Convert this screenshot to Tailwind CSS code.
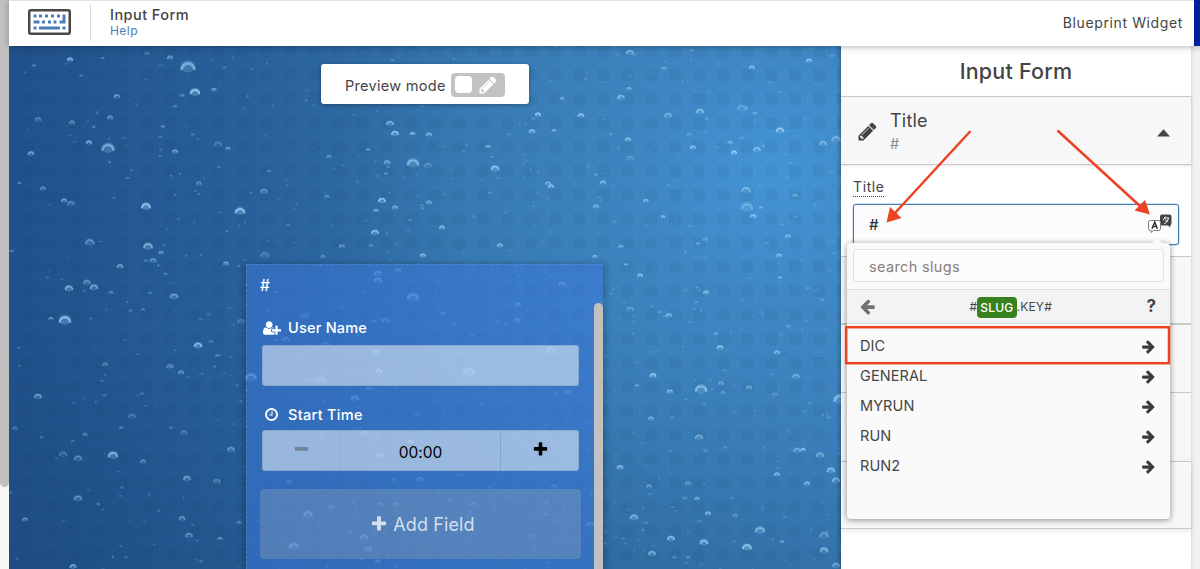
<!DOCTYPE html>
<html lang="en">
<head>
<meta charset="utf-8">
<title>Input Form</title>
<script src="https://cdn.jsdelivr.net/npm/@tailwindcss/browser@4"></script>
</head>
<body class="w-[1200px] h-[569px] overflow-hidden flex bg-white text-[#444] font-['Inter','Liberation_Sans',sans-serif]">
<svg class="hidden">
  <symbol id="pencil" viewBox="0 0 1792 1792"><path d="M491 1536l91-91-235-235-91 91v107h128v128h107zm523-928q0-22-22-22-10 0-17 7l-542 542q-7 7-7 17 0 22 22 22 10 0 17-7l542-542q7-7 7-17zm-54-192l416 416-832 832h-416v-416zm683 96q0 53-37 90l-166 166-416-416 166-165q36-38 90-38 53 0 91 38l235 234q37 39 37 91z"/></symbol>
  <symbol id="plus" viewBox="0 0 1792 1792"><path d="M1600 736v192q0 40-28 68t-68 28h-416v416q0 40-28 68t-68 28h-192q-40 0-68-28t-28-68v-416h-416q-40 0-68-28t-28-68v-192q0-40 28-68t68-28h416v-416q0-40 28-68t68-28h192q40 0 68 28t28 68v416h416q40 0 68 28t28 68z"/></symbol>
  <symbol id="minus" viewBox="0 0 1792 1792"><path d="M1600 736v192q0 40-28 68t-68 28h-1216q-40 0-68-28t-28-68v-192q0-40 28-68t68-28h1216q40 0 68 28t28 68z"/></symbol>
  <symbol id="clock" viewBox="0 0 1792 1792"><path d="M1024 544v448q0 14-9 23t-23 9h-320q-14 0-23-9t-9-23v-64q0-14 9-23t23-9h224v-352q0-14 9-23t23-9h64q14 0 23 9t9 23zm416 352q0-148-73-273t-198-198-273-73-273 73-198 198-73 273 73 273 198 198 273 73 273-73 198-198 73-273zm224 0q0 209-103 385.500t-279.500 279.500-385.500 103-385.500-103-279.500-279.500-103-385.500 103-385.500 279.500-279.500 385.500-103 385.500 103 279.500 279.500 103 385.500z"/></symbol>
  <symbol id="arrow" viewBox="0 0 1792 1792"><path d="M1600 960q0 54-37 91l-651 651q-39 37-91 37-51 0-90-37l-75-75q-38-38-38-91t38-91l293-293h-704q-52 0-84.500-37.500t-32.500-90.500v-128q0-53 32.500-90.500t84.500-37.500h704l-293-294q-38-36-38-90t38-90l75-75q38-38 90-38 53 0 91 38l651 651q37 35 37 90z"/></symbol>
  <symbol id="userplus" viewBox="0 0 2048 1792"><path d="M704 896q159 0 271.500-112.500T1088 512 975.500 240.500 704 128 432.500 240.500 320 512t112.500 271.500T704 896zm960 128h352q13 0 22.500 9.500t9.500 22.500v192q0 13-9.500 22.500t-22.500 9.500h-352v352q0 13-9.500 22.500t-22.500 9.500h-192q-13 0-22.500-9.500t-9.500-22.500v-352h-352q-13 0-22.500-9.500t-9.500-22.500v-192q0-13 9.500-22.500t22.500-9.500h352v-352q0-13 9.500-22.500t22.500-9.500h192q13 0 22.500 9.500t9.500 22.500v352zm-736 224q0 52 38 90t90 38h256v238q-68 50-171 50h-874q-121 0-194-69t-73-190q0-53 3.500-103.500t14-109 26.500-108.500 43-97.500 62-81 85.500-53.500 111.500-20q19 0 39 17 79 61 154.500 91.500t164.500 30.500 164.500-30.500 154.500-91.500q20-17 39-17 132 0 217 96h-223q-52 0-90 38t-38 90v192z"/></symbol>
</svg>

<div class="w-[9px] shrink-0 bg-[#f7f7f7]"><div class="h-[487px] bg-[#c1c1c1] rounded-b-full"></div></div>

<div class="w-[1191px] flex flex-col">
  <header class="relative z-10 h-[46px] -mb-px shrink-0 flex bg-white border-t border-[#e4e4e4] shadow-[0_1px_6px_rgba(0,0,0,.3)]">
    <div class="w-[82px] border-r border-[#dcdcdc] mt-[3px] mb-[5px] pl-[19px] pt-[5px]">
      <svg class="block w-[43px] h-[26px]" viewBox="0 0 43 26">
        <rect x="1.250" y="1.250" width="40.500" height="23.500" rx="1.500" fill="#fff" stroke="#4d4848" stroke-width="2.500"/>
        <g fill="#4a7eb9"><path d="M5.500 5.500h3v3h-3zM11 5.500h3v3h-3zM17 5.500h3v3h-3zM23 5.500h3v3h-3zM29 5.500h3v3h-3zM34.500 5.500h3v9h-6v-3h3zM5.500 11.500h6v3h-6zM14 11.500h3v3h-3zM20 11.500h3v3h-3zM25.500 11.500h3v3h-3zM5.500 17.500h3v3h-3zM11 17.500h21v3h-21zM34.500 17.500h3v3h-3z"/></g>
      </svg>
    </div>
    <div class="pl-[19px] pt-[5px] flex-1">
      <div class="text-[14.500px] leading-[18px] font-medium tracking-[.45px]">Input Form</div>
      <div class="text-[12px] leading-[14px] text-[#4a7eb9] tracking-[.45px]">Help</div>
    </div>
    <div class="pr-[11px] leading-[43px] text-[14px] tracking-[.62px]">Blueprint Widget</div>
    <div class="w-[6px] h-[46px] -mt-px bg-[#001f9c]"></div>
  </header>

  <div class="flex h-[524px]">
    <main class="relative w-[832px] overflow-hidden bg-[radial-gradient(ellipse_430px_400px_at_765px_130px,#4494d5_0%,#428ecc90_35%,transparent_100%),linear-gradient(180deg,transparent_0%,transparent_55%,#0b325a28_100%),linear-gradient(90deg,#20518a_0%,#29619b_30%,#3473aa_55%,#3b7db8_100%)]">
      <svg class="absolute inset-0" width="832" height="524" viewBox="9 45 832 524">
        <defs>
          <pattern id="grid" x="9" y="45" width="24" height="24" patternUnits="userSpaceOnUse"><rect x="12" width="12" height="12" fill="#123a55" fill-opacity=".07"/></pattern>
          <filter id="soft"><feGaussianBlur stdDeviation=".6"/></filter>
        </defs>
        <g id="bubbles" filter="url(#soft)"></g>
        <rect x="9" y="45" width="832" height="524" fill="url(#grid)"/>
      </svg>
      <div class="relative flex flex-col">
        <div class="ml-[312px] mt-[19px] w-[208px] h-[40px] rounded-[3px] bg-white shadow-[0_1px_4px_rgba(0,0,0,.3)] flex items-center pl-[24px]">
          <span class="w-[106px] text-[14.500px] tracking-[.3px] whitespace-nowrap pt-[3px]">Preview mode</span>
          <span class="w-[54px] h-[24px] mt-px rounded-[4px] bg-[#c2c2c2] flex items-center pl-[4px] gap-[6px]">
            <span class="w-[17px] h-[17px] -mt-px rounded-[4px] bg-white"></span>
            <svg class="w-[20px] h-[20px] fill-white"><use href="#pencil"/></svg>
          </span>
        </div>
        <section class="ml-[237px] mt-[160px] w-[357px] h-[320px] flex border-t border-l border-dashed border-[#7fa0c0]/40 bg-[#3a78d8]/55 shadow-[0_2px_8px_rgba(0,0,0,.35)] text-white">
          <div class="w-[347px] pl-[13px] pt-[11px]">
            <div class="text-[15.500px] leading-[20px] font-medium">#</div>
            <div class="mt-[22px] h-[20px] flex items-center text-[14.500px] font-medium tracking-[.22px]"><span class="w-[28px] pl-[3px]"><svg class="w-[18px] h-[16px] fill-white"><use href="#userplus"/></svg></span>User Name</div>
            <div class="mt-[7px] ml-[2px] w-[317px] h-[41px] rounded-[3px] bg-white/50 border border-[#7d9cc0]/60"></div>
            <div class="mt-[19px] h-[20px] flex items-center text-[14.500px] font-medium tracking-[.3px]"><span class="w-[28px] pl-[4px]"><svg class="w-[15px] h-[15px] mb-px fill-white"><use href="#clock"/></svg></span>Start Time</div>
            <div class="mt-[5px] ml-[2px] w-[317px] h-[41px] rounded-[3px] bg-white/50 border border-[#7d9cc0]/60 flex text-black text-[15.500px]">
              <div class="w-[78px] border-r border-[#7d9cc0]/30 flex justify-center pt-[10px] pr-px"><svg class="w-[17px] h-[17px] fill-[#71829b]"><use href="#minus"/></svg></div>
              <div class="w-[160px] border-r border-[#7d9cc0]/70 text-center leading-[43px] tracking-[-.05px]">00:00</div>
              <div class="flex-1 flex justify-center pt-[10px] pl-[2px]"><svg class="w-[17px] h-[17px]"><use href="#plus"/></svg></div>
            </div>
            <div class="mt-[18px] w-[321px] h-[70px] rounded-[4px] bg-[#b9b9b9]/25 flex items-center justify-center gap-[5px] text-[18px] tracking-[.1px] text-white/75 pl-[4px]"><svg class="w-[18px] h-[18px] fill-white/75"><use href="#plus"/></svg>Add Field</div>
          </div>
          <div class="w-[9px] mt-[38px] rounded-t-full bg-[#c1c1c1]"></div>
        </section>
      </div>
    </main>

    <aside class="relative w-[350px] flex flex-col bg-white shadow-[-1px_0_4px_rgba(0,0,0,.3)]">
      <h1 class="h-[51px] pt-[2px] text-center text-[21.500px] leading-[49px] font-medium tracking-[.2px]">Input Form</h1>
      <div class="h-[69px] bg-[#f7f7f7] border-y border-[#c9c9c9] shadow-[0_1px_3px_rgba(0,0,0,.1)] flex pl-[16px]">
        <svg class="w-[21px] h-[21px] mt-[24px] fill-[#444]"><use href="#pencil"/></svg>
        <div class="pl-[12px] pt-[11px] flex-1">
          <div class="text-[18px] leading-[25px] tracking-[.2px]">Title</div>
          <div class="text-[14.500px] leading-[22px] text-[#888]">#</div>
        </div>
        <svg class="w-[13px] h-[8px] mt-[32px] mr-[21px] fill-[#444]" viewBox="0 0 13 8"><path d="M6.500 .3L13 7.500H0z"/></svg>
      </div>
      <div class="h-[91px] px-[12px] pt-[12px]">
        <div class="w-[31px] h-[20px] whitespace-nowrap border-b-[1.500px] border-dotted border-[#444] text-[14px] leading-[20px] tracking-[.6px]">Title</div>
        <div class="mt-[7px] w-[326px] h-[41px] rounded-[3px] border border-[#4a7eb9] ring-[.5px] ring-[#4a7eb9]/50 bg-[#fcfcfc] flex items-center pl-[15px] text-[15px] font-medium text-[#333]">
          <span class="flex-1 pt-px">#</span>
          <svg class="w-[24px] h-[20px] mr-[6px] mb-[2px]" viewBox="0 0 24 20">
            <path d="M14 .5h7.500a2 2 0 0 1 2 2v7a2 2 0 0 1-1.300 1.900v2l-2.200-1.900h-6a2 2 0 0 1-2-2v-7a2 2 0 0 1 2-2z" fill="#444"/>
            <path d="M17.500 2.500l-2.200 3.300M16.500 4h4.200q-.8 4-4.500 5.800M16.800 5.700l2.500 2" stroke="#fff" stroke-width="1" fill="none"/>
            <path d="M2.500 6.500h8a2 2 0 0 1 2 2v6a2 2 0 0 1-2 2h-5l-2.200 2v-2h-.8a2 2 0 0 1-2-2v-6a2 2 0 0 1 2-2z" fill="#fff" stroke="#777"/>
            <path d="M4 14.700L6.700 8l2.700 6.700M5 12.500h3.400" stroke="#333" stroke-width="1.500" fill="none"/>
          </svg>
        </div>
      </div>
      <div class="h-[67px] bg-[#f7f7f7] border-t border-[#c9c9c9]"></div>
      <div class="h-[69px] bg-[#f7f7f7] border-t-2 border-[#c9c9c9]"></div>
      <div class="h-[69px] bg-[#f7f7f7] border-t border-[#c9c9c9]"></div>
      <div class="h-[68px] bg-[#f7f7f7] border-y border-[#c9c9c9] shadow-[0_2px_6px_rgba(0,0,0,.1)]"></div>

      <div class="absolute left-[6px] top-[198px] w-[323px] h-[276px] rounded-[4px] bg-[#fafafa] shadow-[0_1px_6px_rgba(0,0,0,.45)]">
        <div class="absolute right-[7px] -top-[5px] border-x-[6px] border-b-[6px] border-x-transparent border-b-[#fafafa]"></div>
        <div class="h-[46px] pt-[6px] px-[6px]"><div class="w-[311px] h-[33px] rounded-[3px] border border-[#e2e2e2] bg-[#fcfcfc] pl-[15px] leading-[33px] text-[14.500px] tracking-[.35px] text-[#8a7f7d]">search slugs</div></div>
        <div class="h-[35px] bg-[#f3f3f3] border-y border-[#dedede] flex items-center pl-[12px] pr-[14px]">
          <svg class="w-[17px] h-[17px] fill-[#707070] -scale-x-100"><use href="#arrow"/></svg>
          <div class="flex-1 flex items-center justify-center text-[12px] tracking-[.2px] pt-px pr-px">#<span class="h-[21px] leading-[21px] px-[3px] rounded-[4px] bg-[#37811f] text-white font-medium">SLUG</span>.KEY#</div>
          <span class="text-[17px] font-bold">?</span>
        </div>
        <div id="slugs" class="pl-[13px] pr-[14px] pt-[7px] text-[14.500px] tracking-[.08px]">
          <div class="h-[30px] flex items-center justify-between">DIC<svg class="w-[15px] h-[15px] fill-[#3c3c3c]"><use href="#arrow"/></svg></div>
          <div class="h-[30px] flex items-center justify-between">GENERAL<svg class="w-[15px] h-[15px] fill-[#3c3c3c]"><use href="#arrow"/></svg></div>
          <div class="h-[30px] flex items-center justify-between">MYRUN<svg class="w-[15px] h-[15px] fill-[#3c3c3c]"><use href="#arrow"/></svg></div>
          <div class="h-[30px] flex items-center justify-between">RUN<svg class="w-[15px] h-[15px] fill-[#3c3c3c]"><use href="#arrow"/></svg></div>
          <div class="h-[30px] flex items-center justify-between">RUN2<svg class="w-[15px] h-[15px] fill-[#3c3c3c]"><use href="#arrow"/></svg></div>
        </div>
      </div>
      <svg class="absolute left-0 top-0 pointer-events-none" width="350" height="524" viewBox="841 45 350 524">
        <g stroke="#ee4223" stroke-width="2.500"><path d="M970.500 131L895 213M1057.500 130.500L1141 207" fill="none"/><rect x="846.200" y="327.200" width="322.800" height="36" fill="none"/></g>
        <path d="M886.500 222.500l3.500-15.500 11.500 11zM1150 214.500l-15.500-4 10.500-10.500z" fill="#ee4223"/>
      </svg>
    </aside>
    <div class="w-[9px] bg-[#f1f1f1]"></div>
  </div>
</div>
<script>
/* Underwater backdrop: each bubble is x, y, radius, strength. */
const bubbles = [
[70,60,3,.8],[34,66,2,.4],[147,54,2.500,.35],[170,58,3,.6],[188,68,8,.7],[195,93,5.500,1],[214,90,2.500,.6],[182,96,2.500,.4],[117,97,3.500,.55],[81,76,1.500,.4],[38,120,3.500,.4],[72,123,3,.5],[110,118,3,.5],[163,127,2,.5],[193,135,2,.3],[89,143,3,.7],[108,149,7,.7],[31,154,3.500,.7],[175,152,3,.7],[218,145,4.500,.35],[228,149,2.500,.5],[43,189,3,.45],[64,201,3,.6],[71,204,4,.4],[146,207,5,1],[240,212,5.500,.95],[199,184,3,.4],[264,192,4,.5],[90,243,5,.5],[148,247,5,.9],[161,253,2.500,.6],[153,261,3.500,.5],[120,267,3.500,.7],[226,264,3,.6],[69,289,4.500,.8],[87,283,4,.5],[94,288,4.500,.7],[111,293,2.500,.4],[174,297,4.500,.65],[51,319,2.500,.6],[65,321,6.500,.9],[143,310,2,.4],[198,346,4.500,1],[211,342,2.500,.3],[170,367,4,.4],[181,373,3,.5],[105,365,3,.4],[38,397,4,.6],[142,394,2,.3],[132,417,4,.3],[63,455,4.500,.3],[78,459,4.500,.5],[113,456,5.500,.8],[143,462,3,.5],[184,433,3.500,.3],[231,450,4,.5],[187,479,4,.6],[217,482,4,.4],[78,499,4.500,.5],[25,520,3,.5],[182,519,3.500,.5],[189,536,4,.5],[220,539,2.500,.5],[73,567,3.500,.7],[239,523,2.500,.4],[85,435,2.500,.4],[15,429,3,.3],[122,488,2,.3],
[390,124,4,.8],[395,134,4,.9],[412,134,2,.6],[387,163,3.500,.6],[413,164,6.500,.75],[428,166,4,.35],[329,157,2.500,.5],[368,150,2,.6],[386,174,2,.5],[382,201,4,1],[395,208,3,.6],[376,211,2.500,.7],[375,233,4,.85],[342,247,3,.5],[371,246,2,.4],[323,257,2.500,.4],[265,256,5,.3],[327,197,2.500,.4],[241,322,4,.3],
[378,274,4,.6],[378,281,4.500,.6],[398,271,3,.4],[413,298,6.500,.65],[304,317,4,.4],[386,321,4,.5],[374,322,2.500,.4],[562,285,4,.6],[518,305,3,.5],[517,321,3,.5],[443,314,2.500,.5],[286,340,4,.4],[325,345,4,.3],[376,353,4,.6],[379,372,4,.8],[309,381,5,.3],[321,381,5,.45],[469,373,6.500,.7],[551,351,5.500,.6],[251,378,6,.7],[355,399,4.500,.6],[369,389,2.500,.5],[568,393,3,.5],[365,434,4.500,.55],[380,456,4,.6],[411,442,3,.7],[289,483,3.500,.4],[308,515,5,.7],[331,508,3.500,.4],[364,538,4.500,.6],[368,550,4,.5],[294,547,5.500,.6],[396,505,3,.4],[381,505,3,.4],[474,505,4,.4],[554,487,3,.5],[420,480,4,.4],[533,537,4,.3],[590,525,4,.4],[378,562,3,.4],
[630,53,4,.8],[664,69,2.500,.5],[692,51,2,.4],[752,68,3,.7],[809,61,3,.8],[629,89,2.500,.6],[621,98,4,.8],[562,99,2.500,.6],[581,116,3.500,.8],[538,115,3,.9],[532,132,3.500,.8],[554,131,2.500,.6],[700,112,4,.8],[668,116,4,.6],[742,109,5.500,.4],[755,114,2.500,.5],[780,131,4.500,1],[823,144,4,.8],[836,140,5,.6],[693,148,3,.8],[689,135,2.500,.4],[734,153,3,1],[757,150,4,.7],[730,143,2.500,.7],[628,140,3,.8],[630,159,4,.3],[495,169,4.500,.9],[488,147,2.500,.8],[429,135,3,.7],[413,134,2.500,.6],[548,184,3,.6],[551,187,3,.8],[603,183,3,.7],[596,207,3,.6],[646,201,2.500,.9],[663,217,2,.8],[746,191,5,.7],[747,208,6.500,.5],[753,217,3.500,.9],[761,208,2,.6],[795,196,2.500,.6],[442,228,3,.8],[429,203,3,.6],[423,256,3,.8],[500,246,3,.7],[595,257,2.500,.7],[621,247,2.500,.7],[640,276,3,.8],[626,265,2,.7],[705,240,3,.4],[698,244,2,.6],[788,237,3,.6],[779,256,3,.7],[780,278,2,.7],[706,293,3,.8],[697,288,2,.4],[669,316,3.500,.8],[630,310,4,.4],[720,348,3.500,.9],[777,353,3,.7],[716,334,2,.6],[653,376,3.500,1],[637,386,2,.5],[670,392,3,.8],[701,390,6.500,.9],[721,384,3,.6],[723,393,2.500,.5],[749,388,3,.6],[796,377,4,.5],[775,395,3,.3],[840,400,7,.8],[699,438,4.500,.7],[651,419,3,.6],[672,418,2,.3],[620,468,3.500,.8],[803,450,2.500,1],[797,451,4,.5],[820,456,4.500,.7],[831,471,4.500,.8],[836,481,4.500,.7],[807,484,3,.7],[777,475,3,.7],[697,499,2.500,.7],[708,514,3,.7],[634,518,4.500,.7],[735,516,2.500,.5],[760,531,5.500,.7],[671,539,4,.9],[704,543,4.500,.9],[747,548,5,1],[782,542,2,.6],[824,536,5,.5],[824,551,4.500,.8],[652,554,4,.8],[688,558,2,.4],[836,566,4,.6],[649,487,3,.5],[688,484,3,.4]];
let out = '';
for (const [x, y, r, a] of bubbles) {
  const q = r * .8;
  out += `<ellipse cx="${x}" cy="${y - q * .25}" rx="${q * 1.15}" ry="${q * .95}" fill="#79b8ea" fill-opacity="${a * .42}"/>` +
    `<path d="M${x - q} ${y + q * .3}A${q} ${q} 0 1 1 ${x + q} ${y + q * .3}" fill="none" stroke="#a2d6f6" stroke-opacity="${a * .8}" stroke-width="${Math.max(1.4, r * .36)}"/>`;
}
let seed = 41;
const rnd = () => (seed = seed * 16807 % 2147483647) / 2147483647;
for (let i = 0; i < 750; i++) {
  const x = 9 + 832 * Math.pow(rnd(), .72), y = 45 + 524 * rnd();
  out += `<ellipse cx="${x}" cy="${y}" rx="${.7 + rnd() * 1.7}" ry="${.6 + rnd() * .9}" fill="#72b8ec" fill-opacity="${.15 + rnd() * .32}"/>`;
}
document.getElementById('bubbles').innerHTML = out;
</script>
</body>
</html>
